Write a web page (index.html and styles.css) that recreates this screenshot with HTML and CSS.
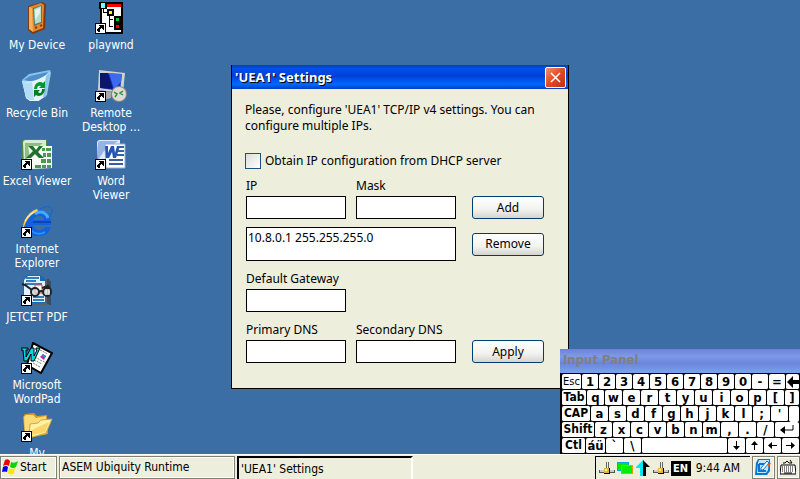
FILE: index.html
```html
<!DOCTYPE html>
<html lang="en">
<head>
    <meta charset="UTF-8">
    <meta name="viewport" content="width=device-width, initial-scale=1.0">
    <title>'UEA1' Settings</title>
    <link rel="stylesheet" href="styles.css">
</head>
<body>
    <svg class="defs" aria-hidden="true">
        <symbol id="shortcut" viewBox="0 0 32 32">
            <rect x="0" y="21" width="11" height="11" fill="#000"/>
            <rect x="1" y="22" width="9" height="9" fill="#fff"/>
            <path d="M4 23h5v5h-1v-1h-1v-1h-1v1h-1v3h-2v-1h-1v-2h1v-1h1v-1h1v-1h-1z" fill="#000"/>
        </symbol>
        <symbol id="network" viewBox="0 0 16 16">
            <path d="M7 2h3v7h-3z" fill="#666"/>
            <path d="M8 2h1v7h-1z" fill="#eee"/>
            <path d="M0 10h16v3H0z" fill="#555"/>
            <path d="M1 10h14v2H1z" fill="#ccc"/>
            <rect x="5" y="8" width="6" height="6" fill="#000"/>
            <rect x="5" y="8" width="5" height="5" fill="#e8b33c"/>
            <path d="M6 9h2v2h-2z" fill="#fff0a0"/>
        </symbol>
    </svg>

    <main class="desktop">
        <nav class="icons">
            <a class="icon" href="#">
                <svg width="32" height="32" viewBox="0 0 32 32">
                    <path d="M7 4 21 0l4 2-1 25-12 5-5-4z" fill="#7a3b12"/>
                    <path d="M8 5 20 1l3 2-1 23-10 4-3-3z" fill="#e8892d"/>
                    <path d="M8 5l3 1 1 24-4-3z" fill="#f8b05a"/>
                    <path d="M12 6l9-3v18l-8 3z" fill="#557a6d"/>
                    <path d="M13 7l7-3v16l-6 2z" fill="#b9dcc7"/>
                    <path d="M14 8l5-2v5l-5 7z" fill="#e2f4e7"/>
                    <path d="M14 26l2-1M19 24l2-1" stroke="#8b3e10" stroke-width="2"/>
                </svg>
                <span>My Device</span>
            </a>
            <a class="icon" href="#">
                <svg width="32" height="32" viewBox="0 0 32 32">
                    <path d="M1 10 8 4 29 0l1 3-4 22-8 6h-9l-4-3z" fill="#8cc2ea"/>
                    <path d="M3 10 9 6l18-4-3 5-11 5z" fill="#4d8fce"/>
                    <path d="M1 11c8 2 18-1 28-9l-4 24-8 5H9L5 28z" fill="#e3f4fd"/>
                    <path d="M1 11c4 2 7 2 10 1l2 18h-4l-4-3z" fill="#b2dcf5"/>
                    <path d="M25 6l4-4-4 24-3 2z" fill="#8cc5ec"/>
                    <path d="M13 19c1-7 6-8 9-6l2-2v7h-6l2-2c-2-1-4 0-4 3z" fill="#06962e"/>
                    <path d="M24 19c-1 7-6 8-9 6l-2 2v-7h6l-2 2c2 2 4 1 4-3z" fill="#087b26"/>
                </svg>
                <span>Recycle Bin</span>
            </a>
            <a class="icon" href="#">
                <svg width="32" height="32" viewBox="0 0 32 32">
                    <path d="M1 4q0-3 3-3h22v27l-21 3H1z" fill="#4e8943"/>
                    <path d="M2 5q0-3 3-3h20v25H3z" fill="#d9ebd4"/>
                    <path d="M4 5h18L9 15l-5 10z" fill="#8fbd82"/>
                    <path d="M7 8h24v22l-20 1z" fill="#f5faf4"/>
                    <path d="M7 8h5l3 4 3-4h4l-5 6 6 6h-5l-4-4-4 4H5l7-7z" fill="#22712b"/>
                    <path d="M21 10h3v3h-3zM25 10h5v3h-5zM22 15h3v4h-3zM26 15h4v4h-4zM20 21h5v4h-5zM26 21h4v4h-4zM14 27h6v3h-6zM21 27h4v3h-4zM26 27h4v3h-4z" fill="#4c9950"/>
                    <use href="#shortcut"/>
                </svg>
                <span>Excel Viewer</span>
            </a>
            <a class="icon" href="#">
                <svg width="32" height="32" viewBox="0 0 32 32">
                    <path d="M19 3c7-4 13-3 12 3l-2 5" fill="none" stroke="#0869d8"/>
                    <path d="M30 19H12c1 6 9 7 12 2h6c-2 7-7 9-13 9C8 30 3 25 4 17 5 9 11 4 18 4c8 0 13 6 12 15z" fill="#1262df"/>
                    <path d="M12 14h11c-1-6-9-6-11 0z" fill="#3a6ea5"/>
                    <path d="M12 16h18" stroke="#0d46b4" stroke-width="2"/>
                    <path d="M14 8c5-4 11-2 13 4" fill="none" stroke="#45a9ff" stroke-width="3"/>
                    <path d="M10 24c3 4 9 5 14 2" fill="none" stroke="#2b91ff" stroke-width="2"/>
                    <path d="M2 21C3 12 9 5 16 3l1 2C10 8 5 14 3 21z" fill="#ffd13e"/>
                    <path d="M4 15c2-4 5-7 9-9" fill="none" stroke="#fff5b5"/>
                    <use href="#shortcut"/>
                </svg>
                <span>Internet<br>Explorer</span>
            </a>
            <a class="icon" href="#">
                <svg width="32" height="32" viewBox="0 0 32 32">
                    <path d="M11 5h18v26H12z" fill="#59636c"/>
                    <path d="M27 5v25M29 7v24" stroke="#27323a"/>
                    <path d="M6 1h14l5 5v23H2V6z" fill="#1b69ad"/>
                    <path d="M7 2h12v5h5v21H3V6z" fill="#e2f1ff"/>
                    <path d="M5 7h10M5 4h13M4 10h17M12 23h11M12 26h11" stroke="#2d7fc5" stroke-width="2"/>
                    <path d="M14 11h7v8h-7z" fill="#fff" stroke="#e44b42"/>
                    <path d="M1 10l3 1 7 5M21 14l6-2 3 4" fill="none" stroke="#222" stroke-width="2"/>
                    <circle cx="14" cy="18" r="4" fill="#cfdde3" fill-opacity=".6" stroke="#222" stroke-width="2"/>
                    <circle cx="26" cy="18" r="4" fill="#c1c8ca" stroke="#222" stroke-width="2"/>
                    <path d="M18 18q2-2 4 0" fill="none" stroke="#222" stroke-width="2"/>
                    <path d="M25 15v6M28 15v6" stroke="#fff"/>
                    <use href="#shortcut"/>
                </svg>
                <span>JETCET PDF</span>
            </a>
            <a class="icon" href="#">
                <svg width="32" height="32" viewBox="0 0 32 32">
                    <path d="M12 1l19 10-11 20-14-8z" fill="#fff" stroke="#000" stroke-width="2"/>
                    <path d="M19 8l8 4M14 15l7 4M13 18l8 4M12 21l7 4M22 19l3 2" stroke="#777" stroke-dasharray="2 1"/>
                    <path d="M19 15l3-3 3 2-2 4z" fill="#c324b8"/>
                    <path d="M22 12l3 2-1 2-3-2z" fill="#00a9b5"/>
                    <path d="M0 6h7v2H5v7l5-9h3v8l3-6h-1V6h4l-6 13h-3v-7l-4 7H3L2 8H0z" fill="#00d7dc" stroke="#000" stroke-width="1"/>
                    <use href="#shortcut"/>
                </svg>
                <span>Microsoft<br>WordPad</span>
            </a>
            <a class="icon" href="#">
                <svg width="32" height="32" viewBox="0 0 32 32">
                    <path d="M2 7l2-3 9-1 3 3 10-1 1 19-19 4-4-2z" fill="#d99b25"/>
                    <path d="M3 7l2-2h7l3 3 10-2v18L7 27l-3-2z" fill="#f8dc76"/>
                    <path d="M9 14l8-1 3-3 11-1-6 14-17 5z" fill="#fff1a7" stroke="#d8a638"/>
                    <path d="M11 20l17-8-4 10-13 3z" fill="#f8d566"/>
                    <use href="#shortcut"/>
                </svg>
                <span>My</span>
            </a>
            <a class="icon" href="#">
                <svg width="32" height="32" viewBox="0 0 32 32">
                    <path d="M6 1h21v30H6z" fill="#fff" stroke="#000" stroke-width="2"/>
                    <path d="M11 2h15v3H11z" fill="#f00"/>
                    <path d="M8 6v4h4M14 12v5h4M14 17v7h4" fill="none" stroke="#000" stroke-width="1" shape-rendering="crispEdges"/>
                    <path d="M5 1h6v5H5zM13 8h5v5h-5zM20 15h5v5h-5zM20 22h5v5h-5z" stroke="#000" stroke-width="2"/>
                    <path d="M6 1h4v5H6z" fill="#7ff"/>
                    <path d="M14 9h3v3h-3z" fill="#ff0"/>
                    <path d="M21 16h3v3h-3z" fill="#0c3"/>
                    <path d="M21 23h3v3h-3z" fill="#f00"/>
                    <use href="#shortcut"/>
                </svg>
                <span>playwnd</span>
            </a>
            <a class="icon" href="#">
                <svg width="32" height="32" viewBox="0 0 32 32">
                    <path d="M4 0l26 3-2 20-25-3z" fill="#d3d2cc"/>
                    <path d="M5 3l22 1-2 17-20-3z" fill="#1838c6"/>
                    <path d="M5 3h8l5 16-13-1z" fill="#0a176c"/>
                    <path d="M14 3l13 1-1 8-7 7z" fill="#3e6bee"/>
                    <path d="M2 20l14 2v6l-7 2-6-3z" fill="#a8a8a8"/>
                    <circle cx="24" cy="24" r="8" fill="#8a8a86"/>
                    <circle cx="24" cy="24" r="7" fill="#dcdcd4"/>
                    <path d="M19 22l3 2-2 3M28 21l-3 2 3 2" fill="none" stroke="#278c37" stroke-width="1.500"/>
                    <use href="#shortcut"/>
                </svg>
                <span>Remote<br>Desktop ...</span>
            </a>
            <a class="icon" href="#">
                <svg width="32" height="32" viewBox="0 0 32 32">
                    <path d="M1 4q0-3 3-3h22v27l-21 3H1z" fill="#426baf"/>
                    <path d="M2 5q0-3 3-3h20v25H3z" fill="#e0eafa"/>
                    <path d="M3 5q0-2 3-2h17L9 13l-6 9z" fill="#93b4e7"/>
                    <path d="M10 6h20v24H11z" fill="#fff" stroke="#95acd3"/>
                    <path d="M10 8h3v7l3-7h3l1 7 2-7h3l-4 12h-3l-1-6-3 6h-3z" fill="#2457ad"/>
                    <path d="M24 9h5M23 13h6M22 17h7M14 22h14M14 26h14" stroke="#375fa5" stroke-width="2"/>
                    <use href="#shortcut"/>
                </svg>
                <span>Word<br>Viewer</span>
            </a>
        </nav>

        <form class="dialog" onsubmit="return false">
            <div class="dialog-title">
                <h1>'UEA1' Settings</h1>
                <button class="close" type="button" aria-label="Close">
                    <svg width="11" height="11" viewBox="0 0 11 11"><path d="M1 1l9 9M10 1l-9 9" stroke="#fff" stroke-width="1.500"/></svg>
                </button>
            </div>
            <div class="dialog-body">
                <p>Please, configure 'UEA1' TCP/IP v4 settings. You can configure multiple IPs.</p>
                <div class="dhcp">
                    <input type="checkbox" id="dhcp">
                    <label for="dhcp">Obtain IP configuration from DHCP server</label>
                </div>
                <div class="fields">
                    <div class="field">
                        <label for="ip">IP</label>
                        <input type="text" id="ip">
                    </div>
                    <div class="field">
                        <label for="mask">Mask</label>
                        <input type="text" id="mask">
                    </div>
                    <button class="btn" type="button">Add</button>

                    <select class="list" size="2" aria-label="Configured IPs">
                        <option>10.8.0.1 255.255.255.0</option>
                    </select>
                    <button class="btn middle" type="button">Remove</button>

                    <div class="field gateway">
                        <label for="gateway">Default Gateway</label>
                        <input type="text" id="gateway">
                    </div>

                    <div class="field">
                        <label for="dns1">Primary DNS</label>
                        <input type="text" id="dns1">
                    </div>
                    <div class="field">
                        <label for="dns2">Secondary DNS</label>
                        <input type="text" id="dns2">
                    </div>
                    <button class="btn" type="submit">Apply</button>
                </div>
            </div>
        </form>

        <section class="panel">
            <h2>Input Panel</h2>
            <div class="keyboard">
                <div class="row digits">
                    <button class="esc">Esc</button><button>1</button><button>2</button><button>3</button><button>4</button><button>5</button><button>6</button><button>7</button><button>8</button><button>9</button><button>0</button><button>-</button><button>=</button>
                    <button class="last" aria-label="Backspace"><svg width="12" height="12" viewBox="0 0 12 12"><path d="M0 6l6-6v4h6v4H6v4z"/></svg></button>
                </div>
                <div class="row">
                    <button class="tab">Tab</button><button>q</button><button>w</button><button>e</button><button>r</button><button>t</button><button>y</button><button>u</button><button>i</button><button>o</button><button>p</button><button>[</button><button class="last">]</button>
                </div>
                <div class="row">
                    <button class="cap">CAP</button><button>a</button><button>s</button><button>d</button><button>f</button><button>g</button><button>h</button><button>j</button><button>k</button><button>l</button><button>;</button><button>'</button>
                    <span class="enter-top"></span>
                </div>
                <div class="row">
                    <button class="shift">Shift</button><button>z</button><button>x</button><button>c</button><button>v</button><button>b</button><button>n</button><button>m</button><button>,</button><button>.</button><button>/</button>
                    <button class="last" aria-label="Enter"><svg width="14" height="10" viewBox="0 0 14 10"><path d="M13 0v5H2" fill="none" stroke="#000"/><path d="M0 5l5-4v8z"/></svg></button>
                </div>
                <div class="row">
                    <button class="ctl">Ctl</button><button class="accent">áü</button><button>`</button><button>\</button><button class="space" aria-label="Space"></button>
                    <button aria-label="Down"><svg width="9" height="9" viewBox="0 0 9 9"><path d="M4 0h1v5h3L4.500 9 1 5h3z"/></svg></button>
                    <button aria-label="Up"><svg width="9" height="9" viewBox="0 0 9 9"><path d="M4 9h1V4h3L4.500 0 1 4h3z"/></svg></button>
                    <button aria-label="Left"><svg width="9" height="9" viewBox="0 0 9 9"><path d="M9 4v1H4v3L0 4.500 4 1v3z"/></svg></button>
                    <button class="arrow-end" aria-label="Right"><svg width="9" height="9" viewBox="0 0 9 9"><path d="M0 4v1h5v3l4-3.500L5 1v3z"/></svg></button>
                </div>
            </div>
        </section>
    </main>

    <footer class="taskbar">
        <button class="start">
            <svg width="16" height="16" viewBox="0 0 16 16">
                <path d="M3 1q3-2 5 1L7 7Q4 5 1 7z" fill="#f00000"/>
                <path d="M9 3q3 2 7-1l-2 6q-3 2-6 0z" fill="#00d800"/>
                <path d="M1 8q3-2 5 0l-1 5Q3 12 0 13z" fill="#0000e8"/>
                <path d="M7 9q3 2 6 0l-1 5q-3 3-6 0z" fill="#f8e800"/>
            </svg>
            Start
        </button>
        <button class="task">ASEM Ubiquity Runtime</button>
        <button class="task pressed">'UEA1' Settings</button>
        <div class="tray">
            <svg width="16" height="16" viewBox="0 0 16 16"><use href="#network"/></svg>
            <svg width="16" height="16" viewBox="0 0 16 16">
                <path d="M0 2h12v9H0z" fill="#00a8d8"/>
                <path d="M1 3h10v7H1z" fill="#00e800"/>
                <path d="M4 5h12v9H4z" fill="#e0a000"/>
                <path d="M5 6h10v7H5z" fill="#00f000"/>
            </svg>
            <svg width="16" height="16" viewBox="0 0 16 16">
                <path d="M8 0l7 7h-4v9H8z" fill="#000"/>
                <path d="M8 0v16H5V8H1V7z" fill="#00e8f8"/>
            </svg>
            <svg width="16" height="16" viewBox="0 0 16 16"><use href="#network"/></svg>
            <span class="lang">EN</span>
            <time>9:44 AM</time>
        </div>
        <button class="tool" aria-label="Show desktop">
            <svg width="16" height="16" viewBox="0 0 16 16">
                <path d="M3 0h12v12l-3 4H0L1 4z" fill="#0876c9"/>
                <path d="M4 1h10l-1 10-2 3H2L3 4z" fill="#bfe7ff"/>
                <path d="M4 5h7M4 5v7h7" fill="none" stroke="#0876c9" stroke-width="2"/>
                <path d="M6 9l6-7 2 2-6 7H6z" fill="#fff" stroke="#0876c9"/>
                <path d="M12 5l4-1-2 4z" fill="#e85b16"/>
            </svg>
        </button>
        <button class="tool" aria-label="Input panel">
            <svg width="16" height="16" viewBox="0 0 16 16">
                <path d="M3 4h2l2-2 2 2h3l-2-3" fill="none" stroke="#000"/>
                <path d="M1 6h14l1 9H0z" fill="#fff" stroke="#000"/>
                <path d="M2 8h12M2 10h12M2 12h12" stroke="#000" stroke-dasharray="1 1"/>
                <path d="M4 14h8" stroke="#000"/>
            </svg>
        </button>
    </footer>
</body>
</html>
```

FILE: styles.css
```css
* {
    box-sizing: border-box;
}
body {
    margin: 0;
    height: 100vh;
    display: flex;
    flex-direction: column;
    overflow: hidden;
    font-family: "DejaVu Sans Condensed", "DejaVu Sans", sans-serif;
    font-size: 12px;
    line-height: 16px;
    color: #000;
}
button, input, select {
    font: inherit;
    color: inherit;
    margin: 0;
    padding: 0;
    border-radius: 0;
}
svg {
    display: block;
    flex: none;
}
.defs {
    position: absolute;
    width: 0;
    height: 0;
}

/* desktop */
.desktop {
    position: relative;
    flex: 1;
    min-height: 0;
    overflow: hidden;
    background: #3a6ea5;
}
.icons {
    display: grid;
    grid-auto-flow: column;
    grid-template-rows: repeat(7, 68px);
    grid-auto-columns: 74px;
    padding-top: 2px;
}
.icon {
    display: flex;
    flex-direction: column;
    align-items: center;
    gap: 4px;
    color: #fff;
    line-height: 14px;
    text-align: center;
    text-decoration: none;
    white-space: nowrap;
}

/* settings dialog */
.dialog {
    position: absolute;
    inset: 0;
    margin: auto;
    width: 338px;
    height: fit-content;
    font-family: "Noto Sans", sans-serif;
    background: #eeeedd;
    border: 1px solid #000;
    border-top: none;
}
.dialog-title {
    display: flex;
    align-items: center;
    justify-content: space-between;
    height: 24px;
    padding: 0 2px 0 3px;
    background: linear-gradient(#0a3fb5, #0050e8 15%, #0040d8 45%, #0068ff 80%, #0040c0);
}
.dialog-title h1 {
    margin: 0;
    font-size: 13px;
    color: #fff;
    text-shadow: 1px 1px #000;
}
.close {
    display: flex;
    align-items: center;
    justify-content: center;
    width: 21px;
    height: 21px;
    border: 1px solid #fff;
    border-radius: 2px;
    background: linear-gradient(135deg, #f09070, #e04a22 50%, #c03010);
}
.dialog-body {
    padding: 13px 14px 25px 13px;
}
.dialog-body p {
    margin: 0 0 18px;
}
.dhcp {
    display: flex;
    align-items: center;
    gap: 4px;
    height: 18px;
    margin-bottom: 6px;
}
.dhcp input {
    appearance: none;
    width: 16px;
    height: 16px;
    border: 1px solid #1c5180;
    background: linear-gradient(135deg, #dcdcd7, #fff);
}
.fields {
    display: grid;
    grid-template-columns: 100px 100px 72px;
    column-gap: 10px;
    row-gap: 8px;
    align-items: end;
    padding-left: 1px;
}
.field {
    display: flex;
    flex-direction: column;
}
.field label {
    height: 20px;
    padding-top: 2px;
}
.field input {
    width: 100%;
    height: 23px;
    padding: 0 2px;
    border: 1px solid #000;
    background: #fff;
}
.gateway {
    grid-column: 1 / -1;
    width: 100px;
}
.gateway label {
    white-space: nowrap;
}
.list {
    grid-column: span 2;
    width: 100%;
    height: 34px;
    padding: 1px 0;
    border: 1px solid #000;
    background: #fff;
    overflow: hidden;
}
.list option {
    padding: 0 1px;
    min-height: 16px;
}
.btn {
    width: 72px;
    height: 23px;
    margin-left: 6px;
    border: 1px solid #003c74;
    border-radius: 3px;
    background: linear-gradient(#fff, #f2f2ee 60%, #d8d4cc);
}
.middle {
    align-self: center;
}

/* on-screen keyboard */
.panel {
    position: absolute;
    right: 0;
    bottom: 0;
    width: 240px;
    background: #000;
}
.panel h2 {
    margin: 0;
    height: 24px;
    padding-left: 3px;
    font-size: 13px;
    line-height: 22px;
    color: #808080;
    background: linear-gradient(#6f80d8, #7d9ae6 30%, #6a86dc 60%, #7fa0ee);
}
.keyboard {
    padding: 1px 1px 0 2px;
}
.row {
    display: flex;
    height: 16px;
}
.row button, .enter-top {
    display: flex;
    align-items: center;
    justify-content: center;
    width: 18px;
    flex: none;
    border: solid #000;
    border-width: 0 1px 1px 0;
    border-radius: 2px;
    background: #fff;
    font-size: 13px;
    font-weight: bold;
    line-height: 13px;
}
.row.digits button {
    width: 17px;
}
.row.digits .esc {
    width: 20px;
    font-size: 11px;
    font-weight: normal;
}
.row .tab {
    width: 25px;
    font-size: 12px;
}
.row .cap {
    width: 29px;
    font-size: 12px;
}
.row .shift {
    width: 33px;
    font-size: 12px;
}
.row .ctl {
    width: 24px;
    font-size: 12px;
}
.row .accent {
    width: 20px;
}
.row .last, .row .space, .row .arrow-end, .enter-top {
    flex: 1;
    min-width: 0;
}
.row .space {
    flex: 5;
}
.row .last, .row .arrow-end, .enter-top {
    border-right: none;
}
.enter-top {
    border-bottom: none;
}

/* taskbar */
.taskbar {
    display: flex;
    gap: 2px;
    height: 25px;
    padding-top: 1px;
    border-top: 1px solid #fff;
    background: #eeeedd;
}
.taskbar button {
    display: flex;
    align-items: center;
    border: 1px solid #808070;
    border-width: 1px 2px 2px 1px;
    outline: 1px solid #fff;
    outline-offset: -2px;
    background: #eeeedd;
    white-space: nowrap;
}
.taskbar .start {
    gap: 2px;
    width: 57px;
    padding-left: 1px;
}
.taskbar .task {
    width: 176px;
    padding-left: 2px;
}
.taskbar .pressed {
    border: 2px solid #000;
    border-right-color: #fff;
    border-bottom: none;
    outline: none;
}
.tray {
    display: flex;
    align-items: center;
    gap: 2px;
    margin-left: auto;
    padding: 0 10px 0 3px;
    border: solid #000;
    border-width: 1px 0 0 1px;
}
.lang {
    width: 20px;
    margin-right: 3px;
    line-height: 15px;
    text-align: center;
    font-size: 11px;
    font-weight: bold;
    color: #fff;
    background: #000;
}
.taskbar .tool {
    justify-content: center;
    width: 23px;
}
```
